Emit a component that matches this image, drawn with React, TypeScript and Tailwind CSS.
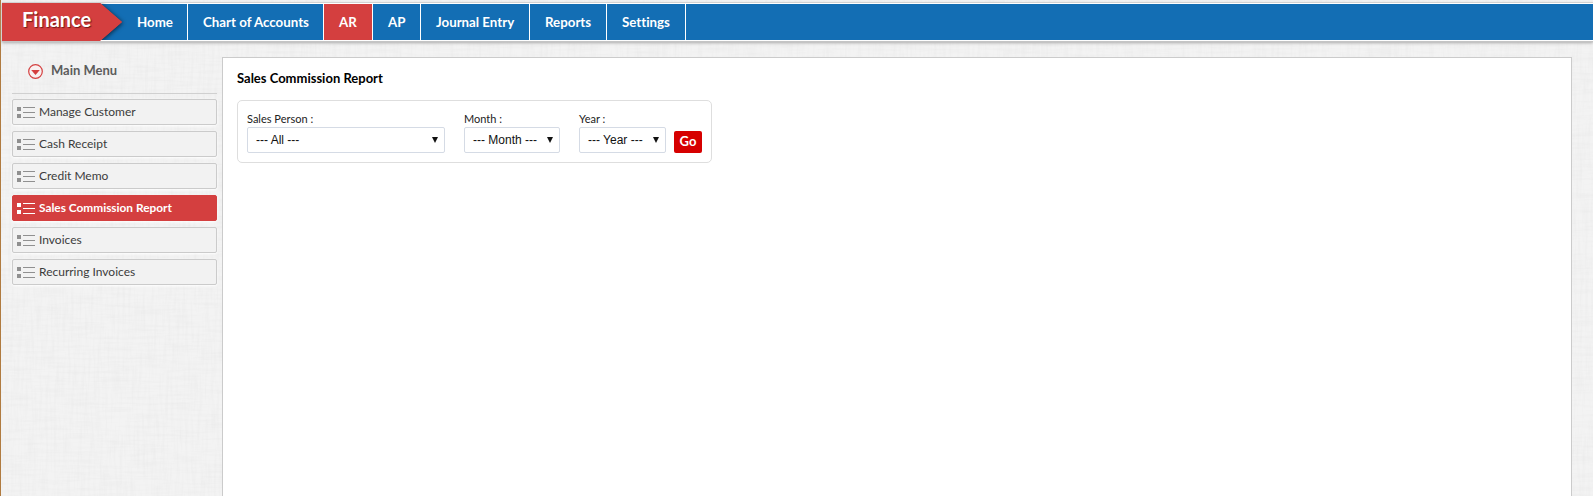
import React from "react";

const NAV = [
  { label: "Home", w: "w-[66px]" },
  { label: "Chart of Accounts", w: "w-[136px]" },
  { label: "AR", w: "w-[49px]", active: true },
  { label: "AP", w: "w-[48px]" },
  { label: "Journal Entry", w: "w-[109px]" },
  { label: "Reports", w: "w-[77px]" },
  { label: "Settings", w: "w-[79px]" },
];

const MENU = [
  "Manage Customer",
  "Cash Receipt",
  "Credit Memo",
  "Sales Commission Report",
  "Invoices",
  "Recurring Invoices",
];

function Linen() {
  return (
    <svg className="absolute inset-0 h-full w-full" aria-hidden="true">
      <filter id="weft" x="0" y="0" width="100%" height="100%" colorInterpolationFilters="sRGB">
        <feTurbulence type="fractalNoise" baseFrequency="0.03 0.35" numOctaves="3" seed="4" />
        <feColorMatrix values="0 0 0 0 0.87  0 0 0 0 0.87  0 0 0 0 0.87  0.45 0 0 0 -0.18" />
      </filter>
      <filter id="warp" x="0" y="0" width="100%" height="100%" colorInterpolationFilters="sRGB">
        <feTurbulence type="fractalNoise" baseFrequency="0.35 0.03" numOctaves="3" seed="9" />
        <feColorMatrix values="0 0 0 0 0.87  0 0 0 0 0.87  0 0 0 0 0.87  0.45 0 0 0 -0.18" />
      </filter>
      <rect width="100%" height="100%" fill="#f3f3f3" />
      <rect width="100%" height="100%" filter="url(#weft)" />
      <rect width="100%" height="100%" filter="url(#warp)" />
    </svg>
  );
}

function ListIcon({ color }: { color: string }) {
  return (
    <svg width="18" height="12" viewBox="0 0 18 12" fill={color} shapeRendering="crispEdges">
      <rect x="0" y="1" width="4" height="4" />
      <rect x="0" y="8" width="4" height="4" />
      <rect x="6" y="1" width="12" height="1" />
      <rect x="6" y="6" width="12" height="1" />
      <rect x="6" y="11" width="12" height="1" />
    </svg>
  );
}

function Field({ label, value, width }: { label: string; value: string; width: string }) {
  return (
    <div className={`flex flex-col ${width}`}>
      <label className="h-[16px] text-[11px] leading-[16px] text-[#222]">{label}</label>
      <div className="flex h-[26px] items-center justify-between rounded-[2px] border border-[#d5dbe5] bg-white pl-2 pr-[6px] font-['Liberation_Sans',Arial,sans-serif] text-[12px] text-[#111]">
        <span className="whitespace-nowrap">{value}</span>
        <svg width="6" height="6" viewBox="0 0 6 6" fill="#111">
          <path d="M0 0h6L3 6z" />
        </svg>
      </div>
    </div>
  );
}

export default function App() {
  return (
    <div className="relative h-[496px] w-[1593px] overflow-hidden font-['Lato',sans-serif] [font-variant-ligatures:none]">
      <Linen />
      <div className="relative flex h-full flex-col border-l border-[#b07b40]">
        <header className="ml-px mt-[2px] flex h-[39px] shrink-0 border-y border-b-white border-t-[#d2d2d2] bg-[#136eb4] shadow-[0_1px_1px_#c4c4c4,0_2px_3px_#aaa]">
          <div className="flex w-full border-t border-white">
            <div className="relative -mt-px h-[38px] w-[120px] shrink-0">
              <svg className="absolute left-0 top-0 overflow-visible" width="121" height="38" viewBox="0 0 121 38">
                <defs>
                  <clipPath id="tip">
                    <rect x="97" y="0" width="30" height="37" />
                  </clipPath>
                </defs>
                <g clipPath="url(#tip)">
                  <path d="M89 0H98L120 19L98 38H89z" fill="#d43f3f" style={{ filter: "drop-shadow(1px 1px 2px rgba(0,0,0,.6))" }} />
                </g>
                <path d="M0 0H98L120 19L98 38H0z" fill="#d43f3f" />
              </svg>
              <span className="relative block pl-5 text-[20px] font-bold leading-[33px] text-white [text-shadow:1px_1px_1px_#701818]">
                Finance
              </span>
            </div>
            <nav className="flex h-[36px]">
              {NAV.map((n) => (
                <a
                  key={n.label}
                  className={`flex items-center whitespace-nowrap border-r border-white pl-[15px] pt-px text-[13.3px] font-bold text-white ${n.w} ${n.active ? "bg-[#d43f3f]" : ""}`}
                >
                  {n.label}
                </a>
              ))}
            </nav>
          </div>
        </header>
        <div className="flex flex-1 pt-4">
          <aside className="ml-[11px] w-[205px]">
            <div className="flex h-[37px] items-start gap-2 border-b border-[#d0d0d0] pl-4 pt-[7px]">
              <svg width="15" height="15" viewBox="0 0 15 15">
                <circle cx="7.5" cy="7.5" r="6.8" fill="#f8f0f0" stroke="#d43f3f" strokeWidth="1.2" />
                <path d="M3.2 6h8.6L7.5 11z" fill="#d43f3f" />
              </svg>
              <h2 className="-mt-[3px] text-[13px] font-bold leading-[18px] text-[#5c5c5c]">Main Menu</h2>
            </div>
            <ul className="flex flex-col gap-[6px] pt-[5px]">
              {MENU.map((m, i) => (
                <li
                  key={m}
                  className={`flex h-[26px] items-center gap-1 rounded-[2px] border pl-1 shadow-[0_1px_3px_#fff] ${
                    i === 3
                      ? "border-[#d43f3f] bg-[#d43f3f] text-[11.85px] font-bold text-white"
                      : "border-[#cbcbcb] bg-[#f2f2f2] text-[12px] text-[#3c3c3c]"
                  }`}
                >
                  <ListIcon color={i === 3 ? "#fff" : "#909090"} />
                  {m}
                </li>
              ))}
            </ul>
          </aside>
          <main className="ml-[5px] w-[1350px] border border-b-0 border-[#cbcbcb] bg-white pl-[14px] pt-[11px]">
            <h1 className="text-[13px] font-bold leading-[18px] text-black">Sales Commission Report</h1>
            <section className="mt-[13px] flex h-[63px] w-[475px] items-start rounded-[5px] border border-[#dedede] pl-[9px] pt-[10px]">
              <Field label="Sales Person :" value="--- All ---" width="w-[198px]" />
              <div className="ml-[19px] flex">
                <Field label="Month :" value="--- Month ---" width="w-[96px]" />
              </div>
              <div className="ml-[19px] flex">
                <Field label="Year :" value="--- Year ---" width="w-[87px]" />
              </div>
              <button className="ml-2 mt-5 h-[22px] w-[28px] rounded-[2px] bg-[#d60000] pb-px text-[13px] font-bold leading-[21px] text-white">
                Go
              </button>
            </section>
          </main>
        </div>
      </div>
    </div>
  );
}
